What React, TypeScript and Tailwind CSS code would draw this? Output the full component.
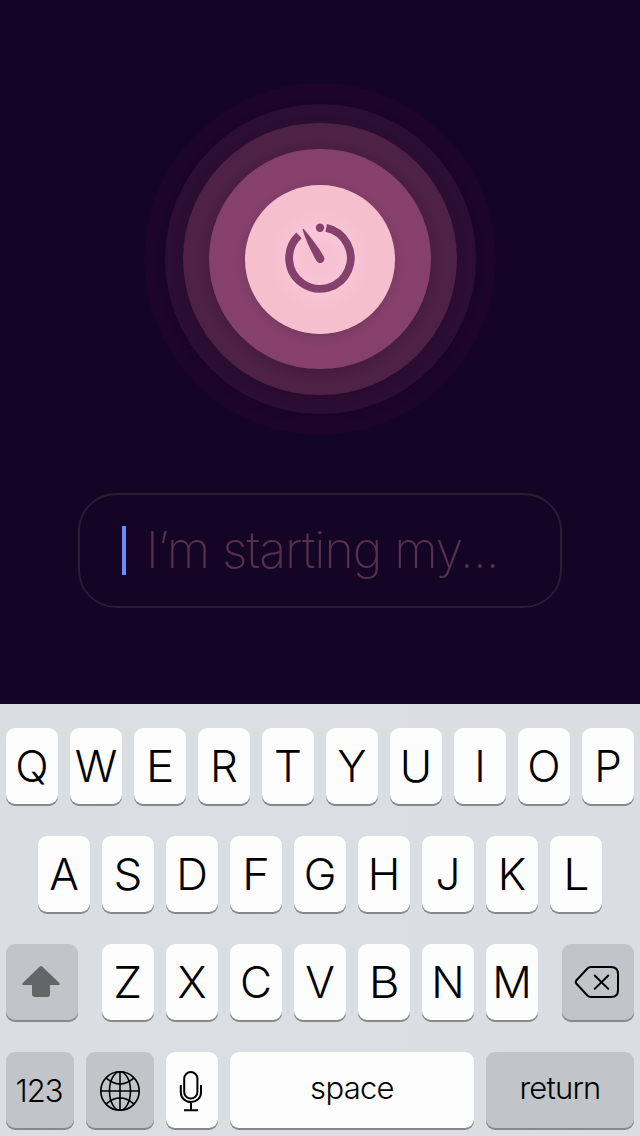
import type { ReactNode } from 'react';

const LETTER_SHAPES: Record<string, string> = {
  E: 'scale-x-[1.1]',
  F: 'scale-x-[1.08]',
  S: 'scale-x-[1.04]',
  L: 'scale-x-[1.06]',
  Z: 'scale-x-[1.06]',
  B: 'scale-x-[1.08]',
};

function Key({ children, className = 'w-[52px]', dark = false }: { children: ReactNode; className?: string; dark?: boolean }) {
  return (
    <button
      className={`flex h-[76px] shrink-0 items-center justify-center rounded-[9px] shadow-[0_2px_0_#86888c] ${dark ? 'bg-[#c1c5c9]' : 'bg-[#fdfdfd]'} ${className}`}
    >
      {children}
    </button>
  );
}

function LetterRow({ letters }: { letters: string }) {
  return (
    <div className="flex gap-3">
      {letters.split('').map((l) => (
        <Key key={l}>
          <span className={`text-[44px] leading-none font-light ${LETTER_SHAPES[l] ?? ''}`}>{l}</span>
        </Key>
      ))}
    </div>
  );
}

function TimerIcon() {
  return (
    <svg width="80" height="80" viewBox="280 219 80 80" fill="none">
      <path d="M326.2 227.85A30.8 30.8 0 1 1 299 235.4" stroke="#85416b" strokeWidth="7.8" />
      <circle cx="320" cy="227.7" r="4.2" fill="#85416b" />
      <path d="M302.4 229.3Q303 228.2 304.4 229.8C312 239 318 246.5 323.6 256.2A4.3 4.3 0 1 1 316.1 260.3C310.5 250 305.6 240 302.4 229.3Z" fill="#85416b" />
    </svg>
  );
}

function ShiftIcon() {
  return (
    <svg width="40" height="34" viewBox="0 0 40 34" fill="#646566">
      <path d="M18.8 1.6Q20 .4 21.2 1.6L38.3 18Q39.6 20 37.4 20H29V29Q29 32 26 32H14Q11 32 11 29V20H2.6Q.4 20 1.7 18Z" />
    </svg>
  );
}

function GlobeIcon() {
  return (
    <svg width="42" height="42" viewBox="0 0 42 42" fill="none" stroke="#000" strokeWidth="1.6">
      <circle cx="21" cy="21" r="19.2" />
      <ellipse cx="21" cy="21" rx="10.5" ry="19.2" />
      <path d="M21 1.8V40.2M1.8 21H40.2M7.2 8.2Q21 20 34.8 8.2M7.2 33.8Q21 22 34.8 33.8" />
    </svg>
  );
}

function MicIcon() {
  return (
    <svg width="26" height="42" viewBox="0 0 26 42" fill="none" stroke="#000" strokeWidth="2">
      <rect x="6.2" y="2" width="13.2" height="26.6" rx="6.6" />
      <path d="M2.8 15V22.5A10.1 9.6 0 0 0 23 22.5V15M13 32V40M6 40.2H20" />
    </svg>
  );
}

function DeleteIcon() {
  return (
    <svg width="46" height="34" viewBox="0 0 46 34" fill="none" stroke="#000" strokeWidth="2">
      <path d="M16.8 2H37Q44 2 44 9V25Q44 32 37 32H16.8Q15 32 13.4 30.5L2.5 18.8Q1 17 2.5 15.2L13.4 3.5Q15 2 16.8 2ZM20.2 10L34.8 24.4M34.8 10L20.2 24.4" />
    </svg>
  );
}

export default function App() {
  return (
    <div className="flex h-[1136px] w-[640px] flex-col overflow-hidden bg-[#150524] font-['Inter','Liberation_Sans',sans-serif] text-black">
      <main className="flex h-[704px] shrink-0 flex-col items-center pt-[83px]">
        <div className="flex size-[352px] shrink-0 items-center justify-center rounded-full bg-[#1c0527]">
          <div className="flex h-[310px] w-[311px] items-center justify-center rounded-full bg-[#2c0e32] shadow-[0_3px_8px_rgba(20,0,25,0.15)]">
            <div className="flex h-[272px] w-[274px] items-center justify-center rounded-full bg-[#4e2146] shadow-[0_3px_12px_rgba(20,0,25,0.2)]">
              <div className="flex h-[220px] w-[222px] items-center justify-center rounded-full bg-[#85416b] shadow-[0_3px_12px_rgba(25,0,30,0.25)]">
                <div className="flex h-[149px] w-[150px] items-center justify-center rounded-full bg-[radial-gradient(circle,#f6bfd0_0px,#f7c6d7_30px,#f6bfce_50px)] shadow-[0_3px_10px_rgba(50,10,50,0.18)]">
                  <TimerIcon />
                </div>
              </div>
            </div>
          </div>
        </div>
        <div className="mt-[58px] flex h-[115px] w-[484px] items-center rounded-[38px] border-2 border-[#2c1b35] pl-[42px]">
          <span className="h-[49px] w-1 bg-[#6d8dfa]" />
          <span className="ml-5 pb-0.5 text-[50px] leading-none font-extralight tracking-[-1.05px] whitespace-nowrap text-[#55304f]">I’m starting my...</span>
        </div>
      </main>
      <section className="flex h-[432px] shrink-0 flex-col items-center gap-8 bg-linear-to-r from-[#dadee2] to-[#dcdde2] pt-6">
        <LetterRow letters="QWERTYUIOP" />
        <LetterRow letters="ASDFGHJKL" />
        <div className="flex gap-6">
          <Key dark className="w-[72px] pr-0.5"><ShiftIcon /></Key>
          <LetterRow letters="ZXCVBNM" />
          <Key dark className="w-[72px] pr-0.5"><DeleteIcon /></Key>
        </div>
        <div className="flex gap-3">
          <Key dark className="w-[68px] pr-0.5"><span className="text-[31px] leading-none font-light tracking-[-1px]">123</span></Key>
          <Key dark className="w-[68px] pt-0.5"><GlobeIcon /></Key>
          <Key className="w-[52px] pt-0.5 pr-0.5"><MicIcon /></Key>
          <Key className="w-[244px] pb-1.5"><span className="text-[31px] leading-none font-light tracking-[-0.7px]">space</span></Key>
          <Key dark className="w-[148px] pb-1.5"><span className="text-[31px] leading-none font-light tracking-[-0.8px]">return</span></Key>
        </div>
      </section>
    </div>
  );
}
